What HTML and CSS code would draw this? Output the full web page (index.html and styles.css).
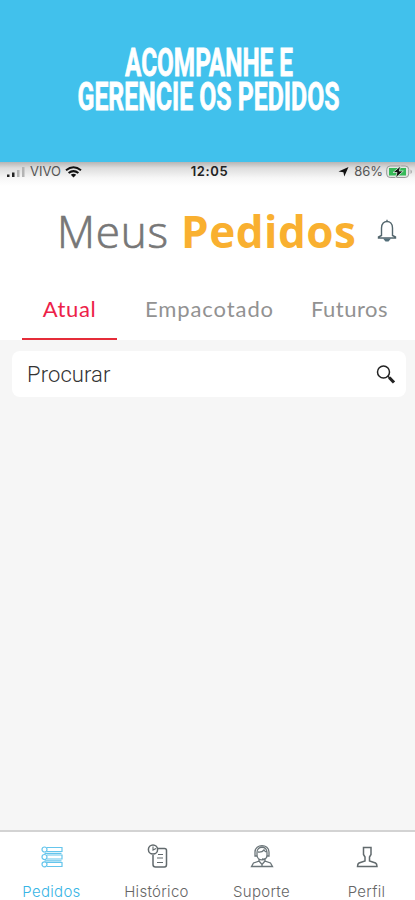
FILE: index.html
```html
<!DOCTYPE html>
<html lang="pt-BR">
<head>
<meta charset="utf-8">
<meta name="viewport" content="width=device-width">
<title>Meus Pedidos</title>
<link rel="stylesheet" href="styles.css">
</head>
<body>
<header class="banner">
  <svg width="415" height="162" viewBox="0 0 415 162" class="headline">
    <text x="125" y="75.5" textLength="168" lengthAdjust="spacingAndGlyphs">ACOMPANHE E</text>
    <text x="77.5" y="110" textLength="262" lengthAdjust="spacingAndGlyphs">GERENCIE OS PEDIDOS</text>
  </svg>
</header>
<div class="status">
  <div class="carrier">
    <svg width="20" height="12" viewBox="0 0 20 12"><path d="M1 8.500h2.500V11H1zM6 6.500h2.500V11H6z" fill="#222"/><path d="M11 4h2.500v7H11zM16 1h2.500v10H16z" fill="#b4b4b4"/></svg>
    <span>VIVO</span>
    <svg width="17" height="12" viewBox="0 0 17 12" fill="none" stroke="#111" stroke-width="2"><path d="M1 4.300Q8.500-1.900 16 4.300M3.600 7.100Q8.500 3.100 13.400 7.100"/><path d="M5.800 8.700Q8.500 6.700 11.200 8.700L8.500 11.500z" fill="#111" stroke="none"/></svg>
  </div>
  <b class="clock">12:05</b>
  <div class="power">
    <svg width="11" height="10" viewBox="0 0 11 10"><path d="M10.500 0L6.300 9.500 5.400 5.300.5 4.600z" fill="#111"/></svg>
    <span>86%</span>
    <svg width="27" height="14" viewBox="0 0 27 14"><rect x=".7" y="1" width="22" height="11.500" rx="3.500" fill="#e4e8e4" stroke="#999"/><path d="M24.500 4.500q3 2 0 4.500z" fill="#aaa"/><path d="M3 3h17v7.500H3z" fill="#36ba58"/><path d="M14.800.8L7 7.500h4L9.500 13l7.800-7h-4z" fill="#111" stroke="#dcefe0" stroke-width=".8"/></svg>
  </div>
</div>
<div class="title">
  <h1><span>Meus</span> <b>Pedidos</b></h1>
  <svg class="bell" width="20" height="24" viewBox="0 0 20 24" fill="none" stroke="#53666d" stroke-width="1.400"><path d="M10 2.500V.8M4.500 16.500V9c0-8.700 11-8.700 11 0v7.500L18.500 18v1h-17v-1z"/><path d="M6 19.500h8L11.500 22.500h-3z" fill="#536f7a" stroke="none"/></svg>
</div>
<nav class="tabs"><a class="tab on"><span>Atual</span></a><a class="tab mid"><span>Empacotado</span></a><a class="tab last"><span>Futuros</span></a></nav>
<main>
  <div class="search">
    <span>Procurar</span>
    <svg width="20" height="20" viewBox="0 0 20 20" fill="none" stroke="#222"><circle cx="7.500" cy="8" r="6" stroke-width="1.500"/><path d="M11.700 12l2 2" stroke-width="1.500"/><path d="M13.200 13.500l4.800 5" stroke-width="3.200"/></svg>
  </div>
</main>
<footer class="bar">
  <a class="item on"><svg width="24" height="24" viewBox="0 0 24 24" fill="none" stroke="#65c5ec" stroke-width="1.200"><path d="M7 3.500h15v4H7M7 11h15v4H7M7 18.500h15v4H7M4.500 9.300h17M4.500 16.800h17"/><circle cx="4.500" cy="5.500" r="2.500"/><circle cx="4.500" cy="13" r="2.500"/><circle cx="4.500" cy="20.300" r="2.500"/></svg><span>Pedidos</span></a>
  <a class="item"><svg width="24" height="24" viewBox="0 0 24 24" fill="none" stroke="#626a6d" stroke-width="1.500"><path d="M13 4.500h6.500q2 0 2 2v14q0 2.500-2 2.500h-9q-2.500 0-2.500-2.500V11"/><circle cx="8" cy="5.500" r="4.600"/><path d="M8 2.500V6L11 4.500M13 10.500h5M12 14h6M12 18.500h6" stroke-width="1.100"/></svg><span>Histórico</span></a>
  <a class="item"><svg width="24" height="24" viewBox="0 0 24 24" fill="none" stroke="#6b7579" stroke-width="1.300"><path d="M7 8.500c0-7 10-7 10 0v2.500c0 6.500-10 6.500-10 0zM5 8C5-.5 19-.5 19 8v4h-2M5 8v4h2M8 8q4 .5 6-2 1 2 3 2M17 13q-1 2.500-5 2M9 15.500V17l-5.500 2-2 3.500h21l-2-3.500L15 17v-1.500M9 17l3 3.500 3-3.500M12 20v2.500"/></svg><span>Suporte</span></a>
  <a class="item"><svg width="24" height="24" viewBox="0 0 24 24" fill="none" stroke="#626a6d" stroke-width="1.500"><path d="M8.500 3.500h7.500v7l-1.500 2.500v4l6 2q1.500.8 1.500 3.500H2.500q0-2.700 1.500-3.500l6-2v-4l-1.500-2.500z"/></svg><span>Perfil</span></a>
</footer>
</body>
</html>
```
FILE: styles.css
```css
* { box-sizing: border-box; }
body { margin: 0; height: 900px; display: flex; flex-direction: column; background: #fff; overflow: hidden; }
svg { display: block; flex: none; }
.banner { height: 162px; background: #41c1ec; flex: none; }
.headline text { font: 700 39px Roboto, sans-serif; fill: #fff; stroke: #fff; stroke-width: .8; }
.status { height: 24px; flex: none; display: grid; grid-template-columns: 1fr auto 1fr; align-items: start; padding: 2px 2px 0 6px; background: linear-gradient(#b5b5b5, #ddd 6px, #f7f7f7 16px, #fff); font: 13px/15px Inter, sans-serif; color: #555; }
.carrier, .power { display: flex; align-items: center; gap: 4px; height: 15px; }
.power { justify-content: flex-end; gap: 5px; }
.power svg:last-child { margin-left: -2px; }
.clock { color: #222; font-weight: 600; letter-spacing: .6px; }
.title { height: 94px; flex: none; display: flex; align-items: center; justify-content: space-between; padding: 0 18px 5px 57px; }
h1 { margin: 0; font: 300 44px/60px "Open Sans", sans-serif; letter-spacing: .8px; color: #777; white-space: nowrap; }
h1 span { -webkit-text-stroke: .7px #777; }
h1 b { font-weight: 700; letter-spacing: .5px; color: #f9b030; }
.tabs { height: 60px; flex: none; display: flex; padding-left: 22px; font: 22px/58px Lato, sans-serif; letter-spacing: .9px; color: #929292; }
.tab { text-align: center; width: 95px; height: 60px; }
.mid { width: 185px; }
.last { width: 95px; letter-spacing: .5px; }
.tab.on { color: #ed2148; border-bottom: 2px solid #e52c39; letter-spacing: .6px; }
main { flex: 1; background: #f6f6f6; padding: 11px 9px 0 12px; }
.search { height: 46px; border-radius: 8px; background: #fff; display: flex; align-items: center; justify-content: space-between; padding: 0 10px 0 15px; font: 300 22px/46px Roboto, sans-serif; letter-spacing: .1px; color: #333; }
.search span { padding-top: 2px; }
.bar { height: 70px; flex: none; border-top: 2px solid #d3d3d3; display: flex; padding-top: 12px; font: 300 15px/20px Inter, sans-serif; letter-spacing: .3px; color: #666; }
.item { width: 105px; flex: none; display: flex; flex-direction: column; align-items: center; gap: 14px; padding-right: 2px; }
.item.on { color: #38b5e5; }
```
